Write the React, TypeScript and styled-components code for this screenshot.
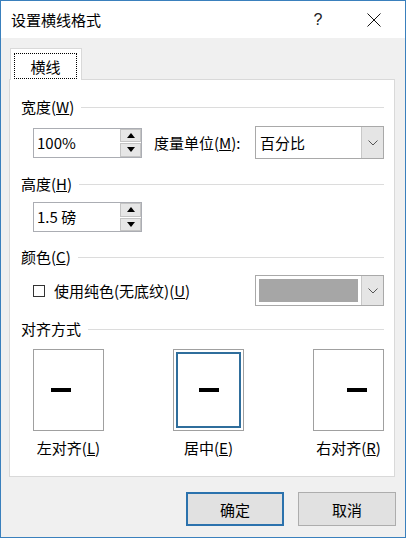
import React from "react";
import styled, { createGlobalStyle } from "styled-components";

const GlobalStyle = createGlobalStyle`
  html, body {
    margin: 0;
    padding: 0;
    background: #ffffff;
  }
  body {
    font-family: "Noto Sans CJK SC", "Noto Sans", sans-serif;
    color: #000;
  }
`;

const Window = styled.div`
  width: 406px;
  height: 538px;
  box-sizing: border-box;
  border: 1px solid #3a80bd;
  background: #f0f0f0;
  display: flex;
  flex-direction: column;
`;

const TitleBar = styled.div`
  height: 37px;
  flex-shrink: 0;
  background: #ffffff;
  display: flex;
  align-items: center;
  padding: 0 8px 0 10px;
`;

const Title = styled.div`
  flex: 1;
  font-size: 15px;
  line-height: 20px;
`;

const CaptionButton = styled.div<{ $gap?: number }>`
  width: 46px;
  height: 37px;
  display: flex;
  align-items: center;
  justify-content: center;
  margin-left: ${({ $gap = 0 }) => $gap}px;
  font-family: "Liberation Sans", sans-serif;
  font-size: 16px;
  color: #222;
`;

const Body = styled.div`
  flex: 1;
  display: flex;
  flex-direction: column;
  padding: 10px 10px 0 8px;
`;

const TabStrip = styled.div`
  display: flex;
  padding-left: 1px;
`;

const Tab = styled.div`
  width: 72px;
  height: 32px;
  box-sizing: border-box;
  border: 1px solid #d9d9d9;
  border-bottom: none;
  background: #ffffff;
  margin-bottom: -1px;
  position: relative;
  z-index: 1;
  padding: 4px 4px 1px 3px;
  display: flex;
`;

const FocusRect = styled.div`
  flex: 1;
  border: 1px dotted #000;
  display: flex;
  align-items: center;
  justify-content: center;
  font-size: 15px;
`;

const Panel = styled.div`
  height: 398px;
  box-sizing: border-box;
  border: 1px solid #d9d9d9;
  background: #ffffff;
  padding: 17px 10px 0 11px;
  display: flex;
  flex-direction: column;
`;

const SectionHeader = styled.div<{ $top?: number }>`
  display: flex;
  align-items: center;
  gap: 7px;
  margin-top: ${({ $top = 0 }) => $top}px;
  font-size: 15px;
  line-height: 20px;

  &::after {
    content: "";
    flex: 1;
    height: 1px;
    background: #dcdcdc;
  }
`;

const Row = styled.div<{ $top: number }>`
  display: flex;
  align-items: center;
  margin-left: 12px;
  margin-top: ${({ $top }) => $top}px;
`;

const Spinner = styled.div`
  width: 109px;
  height: 30px;
  box-sizing: border-box;
  border: 1px solid #abadb3;
  background: #fff;
  display: flex;
`;

const SpinValue = styled.div`
  flex: 1;
  padding-left: 3px;
  font-size: 15px;
  line-height: 28px;
`;

const SpinButtons = styled.div`
  width: 21px;
  display: flex;
  flex-direction: column;
  gap: 1px;
  padding: 0 0 0 1px;
`;

const SpinBtn = styled.div`
  flex: 1;
  background: #e6e6e6;
  border: 1px solid #c4c4c4;
  display: flex;
  align-items: center;
  justify-content: center;
`;

const Label = styled.div<{ $left?: number }>`
  font-size: 15px;
  line-height: 20px;
  margin-left: ${({ $left = 0 }) => $left}px;
  white-space: nowrap;
`;

const Select = styled.div<{ $h: number }>`
  margin-left: auto;
  width: 129px;
  height: ${({ $h }) => $h}px;
  box-sizing: border-box;
  border: 1px solid #a9a9a9;
  background: #fff;
  display: flex;
`;

const SelectText = styled.div`
  flex: 1;
  padding-left: 4px;
  font-size: 15px;
  display: flex;
  align-items: center;
`;

const Swatch = styled.div<{ $color: string }>`
  flex: 1;
  margin: 3px 3px 3px 3px;
  background: ${({ $color }) => $color};
`;

const DropButton = styled.div`
  width: 21px;
  background: #e5e5e5;
  border-left: 1px solid #c8c8c8;
  display: flex;
  align-items: center;
  justify-content: center;
`;

const CheckBox = styled.div`
  width: 12px;
  height: 12px;
  box-sizing: border-box;
  border: 1px solid #333;
  background: #fff;
`;

const AlignRow = styled.div`
  display: flex;
  justify-content: space-between;
  margin: 10px 0 0 12px;
`;

const AlignItem = styled.div`
  display: flex;
  flex-direction: column;
  align-items: center;
  width: 71px;
`;

const AlignBox = styled.div<{ $align: "left" | "center" | "right"; $selected?: boolean }>`
  width: 71px;
  height: 82px;
  box-sizing: border-box;
  border: 1px solid #a0a0a0;
  background: #fff;
  display: flex;
  align-items: center;
  justify-content: ${({ $align }) =>
    $align === "left" ? "flex-start" : $align === "right" ? "flex-end" : "center"};
  padding: 0 16px 0 17px;
  box-shadow: ${({ $selected }) =>
    $selected ? "inset 0 0 0 2px #fff, inset 0 0 0 4px #2f6e9c" : "none"};
`;

const Dash = styled.div`
  width: 20px;
  height: 4px;
  background: #000;
`;

const AlignLabel = styled.div`
  margin-top: 7px;
  font-size: 15px;
  line-height: 20px;
  white-space: nowrap;
`;

const Footer = styled.div`
  display: flex;
  justify-content: flex-end;
  gap: 14px;
  padding-top: 15px;
  margin-right: -1px;
`;

const Button = styled.div<{ $default?: boolean }>`
  width: 98px;
  height: 34px;
  box-sizing: border-box;
  background: #e1e1e1;
  border: ${({ $default }) => ($default ? "2px solid #2b72ad" : "1px solid #adadad")};
  display: flex;
  align-items: center;
  justify-content: center;
  font-size: 15px;
`;

const Up = () => (
  <svg width="8" height="5" viewBox="0 0 8 5">
    <path d="M0 5 L4 0 L8 5 Z" fill="#000" />
  </svg>
);

const Down = () => (
  <svg width="8" height="5" viewBox="0 0 8 5">
    <path d="M0 0 L8 0 L4 5 Z" fill="#000" />
  </svg>
);

const Chevron = () => (
  <svg width="10" height="6" viewBox="0 0 10 6">
    <path d="M0.5 0.5 L5 5 L9.5 0.5" fill="none" stroke="#555" strokeWidth="1" />
  </svg>
);

const NumberBox = ({ value }: { value: string }) => (
  <Spinner>
    <SpinValue>{value}</SpinValue>
    <SpinButtons>
      <SpinBtn>
        <Up />
      </SpinBtn>
      <SpinBtn>
        <Down />
      </SpinBtn>
    </SpinButtons>
  </Spinner>
);

const aligns: { key: "left" | "center" | "right"; text: string; key2: string }[] = [
  { key: "left", text: "左对齐", key2: "L" },
  { key: "center", text: "居中", key2: "E" },
  { key: "right", text: "右对齐", key2: "R" },
];

export default function App() {
  return (
    <>
      <GlobalStyle />
      <Window>
        <TitleBar>
          <Title>设置横线格式</Title>
          <CaptionButton>?</CaptionButton>
          <CaptionButton $gap={10}>
            <svg width="14" height="14" viewBox="0 0 14 14">
              <path d="M0.5 0.5 L13.5 13.5 M13.5 0.5 L0.5 13.5" stroke="#111" strokeWidth="1" />
            </svg>
          </CaptionButton>
        </TitleBar>
        <Body>
          <TabStrip>
            <Tab>
              <FocusRect>横线</FocusRect>
            </Tab>
          </TabStrip>
          <Panel>
            <SectionHeader>
              <span>
                宽度(<u>W</u>)
              </span>
            </SectionHeader>
            <Row $top={9}>
              <NumberBox value="100%" />
              <Label $left={12}>
                度量单位(<u>M</u>):
              </Label>
              <Select $h={33}>
                <SelectText>百分比</SelectText>
                <DropButton>
                  <Chevron />
                </DropButton>
              </Select>
            </Row>

            <SectionHeader $top={15}>
              <span>
                高度(<u>H</u>)
              </span>
            </SectionHeader>
            <Row $top={8}>
              <NumberBox value="1.5 磅" />
            </Row>

            <SectionHeader $top={15}>
              <span>
                颜色(<u>C</u>)
              </span>
            </SectionHeader>
            <Row $top={8}>
              <CheckBox />
              <Label $left={9}>
                使用纯色(无底纹)(<u>U</u>)
              </Label>
              <Select $h={31}>
                <Swatch $color="#a6a6a6" />
                <DropButton>
                  <Chevron />
                </DropButton>
              </Select>
            </Row>

            <SectionHeader $top={13}>
              <span>对齐方式</span>
            </SectionHeader>
            <AlignRow>
              {aligns.map((a) => (
                <AlignItem key={a.key}>
                  <AlignBox $align={a.key} $selected={a.key === "center"}>
                    <Dash />
                  </AlignBox>
                  <AlignLabel>
                    {a.text}(<u>{a.key2}</u>)
                  </AlignLabel>
                </AlignItem>
              ))}
            </AlignRow>
          </Panel>
          <Footer>
            <Button $default>确定</Button>
            <Button>取消</Button>
          </Footer>
        </Body>
      </Window>
    </>
  );
}
